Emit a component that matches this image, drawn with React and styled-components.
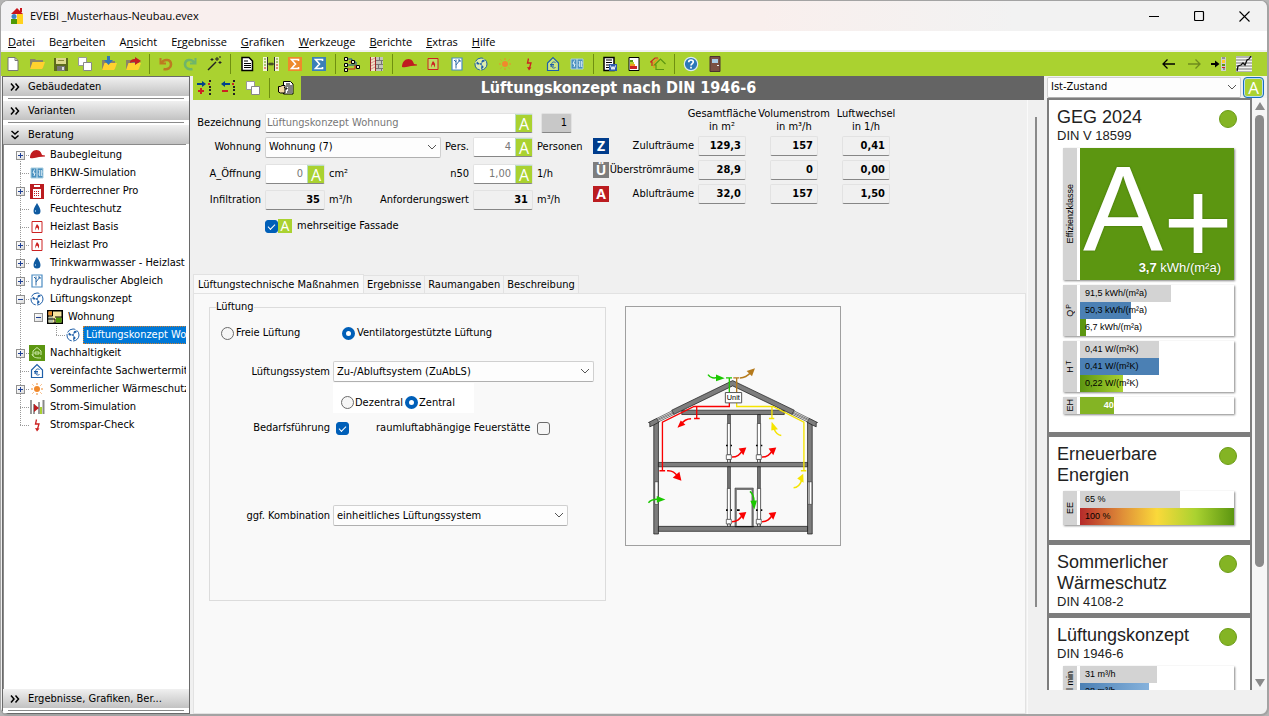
import React, { useState } from "react";
import styled, { createGlobalStyle, css } from "styled-components";

const GlobalStyle = createGlobalStyle`
  * {
    box-sizing: border-box;
  }
  body {
    margin: 0;
    background: #b4b4b4;
    font-family: "DejaVu Sans Condensed", Roboto, sans-serif;
    font-size: 11px;
    line-height: 14px;
    color: #000;
  }
  button, input, select {
    font: inherit;
    color: inherit;
    margin: 0;
    padding: 0;
  }
  button {
    border: none;
    background: none;
  }
  svg {
    display: block;
    flex: none;
  }
`;

/* ---------- icons ---------- */

const Svg = ({ size = 16, children, ...rest }) => (
  <svg width={size} height={size} viewBox="0 0 16 16" fill="none" aria-hidden="true" {...rest}>
    {children}
  </svg>
);

const AppIcon = () => (
  <Svg>
    <path d="M2 6L8 0l6 6z" fill="#c9151b" />
    <path d="M11 0h2v4h-2z" fill="#c9151b" />
    <path d="M8 6h6v10H8z" fill="#ffd21f" />
    <path d="M2 11h6v5H2z" fill="#4e9a06" />
    <circle cx="5" cy="8.500" r="2.500" fill="#3a86c8" />
  </Svg>
);
const NewIcon = () => (
  <Svg>
    <path d="M3 1.500h7l3 3v10H3z" fill="#fff" stroke="#777" />
    <path d="M10 1.500v3h3" stroke="#777" />
  </Svg>
);
const FolderBase = () => (
  <>
    <path d="M1 4h5l1 1h7v9H1z" fill="#8b8468" />
    <path d="M3.500 7H16l-2.500 7H1z" fill="#ffd22e" />
  </>
);
const OpenIcon = () => (
  <Svg>
    <path d="M1 3h5l1 1h7v9H1z" fill="#8b8468" />
    <path d="M3.500 6H16l-2.500 7H1z" fill="#ffd22e" />
  </Svg>
);
const SaveIcon = () => (
  <Svg>
    <path d="M1 2h14v13H1z" fill="#5c6b1c" />
    <path d="M3 2h10v6H3z" fill="#dcd98c" />
    <path d="M5 4h6v1H5z" fill="#8b8a3a" />
    <path d="M4 10h8v5H4z" fill="#777" />
    <path d="M9 11h2v3H9z" fill="#ddd" />
  </Svg>
);
const CopyIcon = () => (
  <Svg>
    <path d="M1.500 1.500h8v8h-8z" fill="#fff" stroke="#999" />
    <path d="M6.500 6.500h8v8h-8z" fill="#fff" stroke="#888" />
  </Svg>
);
const ImportIcon = () => (
  <Svg>
    <FolderBase />
    <path d="M6 0h3v4h3L7.500 9 3 4h3z" fill="#2f78b8" />
  </Svg>
);
const ExportIcon = () => (
  <Svg>
    <FolderBase />
    <path d="M5 7c0-3 2-4 5-4V1l6 4-6 4V6C8 6 6 6 5 7z" fill="#c41e24" />
  </Svg>
);
const UndoIcon = () => (
  <Svg>
    <path d="M2.500 2v5.500H8" stroke="#bd7a21" strokeWidth="2" />
    <path d="M3.500 7C6 2.500 13 3 13 8.500c0 3.500-3.500 5.500-7.500 4.500" stroke="#bd7a21" strokeWidth="2.600" />
  </Svg>
);
const RedoIcon = () => (
  <Svg>
    <path d="M13.500 2v5.500H8" stroke="#6fb56a" strokeWidth="2" />
    <path d="M12.500 7C10 2.500 3 3 3 8.500c0 3.500 3.500 5.500 7.500 4.500" stroke="#6fb56a" strokeWidth="2.600" />
  </Svg>
);
const WandIcon = () => (
  <Svg>
    <path d="M2 14L10 6" stroke="#222" strokeWidth="1.500" />
    <path d="M11 1v4M9 3h4M6 2v3M4.500 3.500h3M14 5v3M12.500 6.500h3M14 0v2" stroke="#222" />
  </Svg>
);
const DocIcon = () => (
  <Svg>
    <path d="M3 1.500h7l3.500 3.500v9.500H3z" fill="#fff" stroke="#000" strokeWidth="1.500" />
    <path d="M5 5h4M5 7.500h7M5 9.500h7M5 11.500h7" stroke="#000" />
  </Svg>
);
const CompareIcon = () => (
  <Svg>
    <path d="M0 1h5v14H0zM11 1h5v14h-5z" fill="#f3f6d2" />
    <path d="M4.500 1v14M11.500 1v14" stroke="#333" />
    <path d="M1 3h2M1 6h2M1 9h2M13 3h2M13 6h2" stroke="#5b9418" />
    <path d="M1 12h2M13 9h2M13 12h2" stroke="#c22" />
    <path d="M5 8h6M7 6.500v3M9 6.500v3" stroke="#222" />
  </Svg>
);
const SigmaIcon = ({ color }) => (
  <Svg>
    <path d="M1 1h14v14H1z" fill={color} />
    <path d="M11.500 5V3.500h-7L8.500 8l-4 4.500h7V11" stroke="#fff" strokeWidth="1.600" />
  </Svg>
);
const TreeIcon = () => (
  <Svg>
    <path d="M3 3h5M3 9h8M8 3v3h4v4" stroke="#1b4fa0" />
    <path d="M8 6h-3M11 9v4H3M11 11h4" stroke="#c22" />
    <path d="M.500 1.500h3v3h-3zM.500 7.500h3v3h-3zM.500 12.500h3v3h-3zM7.500 4.500h3v3h-3zM12.500 9.500h3v3h-3z" fill="#f4f4d0" stroke="#000" />
  </Svg>
);
const WallIcon = () => (
  <Svg>
    <path d="M2 1h13v14H2z" fill="#c4c4bc" />
    <path d="M3 1h4v14H3z" fill="#efe4c8" />
    <path d="M3 4l4-2M3 7l4-2M3 10l4-2M3 13l4-2" stroke="#d89090" />
    <path d="M2 1h1v14H2zM7 1h1v14H7z" fill="#a02c2c" />
    <path d="M8 4.500h7M8 8.500h7M8 12.500h7M11.500 1v3M13.500 5v3M10.500 9v3M13.500 13v2" stroke="#777" />
  </Svg>
);
const CapIcon = () => (
  <Svg>
    <path d="M1 11C1 6 4 3 7.500 3 11 3 12.500 6 13 8l3 .500v1L10 10c-3 1-6 1.500-9 1z" fill="#c01c20" />
  </Svg>
);
const FlameIcon = () => (
  <Svg>
    <path d="M3 2.500h10v11H3z" fill="#fff" fillOpacity="0.250" stroke="#c22" />
    <path d="M8 5c1.500 1.500 2.500 3 2 5l-1 1.500V9.500L8 8.500l-1 1v2c-1.500-2-.500-4 1-6.500z" fill="#c22" />
  </Svg>
);
const PipeIcon = () => (
  <Svg>
    <path d="M3 2h10v12H3z" fill="#fff" stroke="#4a8bc2" strokeWidth="1.200" />
    <path d="M5 4l2 2M7 3.500v9M7 9l4-5M9 4h2v2" stroke="#2a6aa8" />
  </Svg>
);
const FanIcon = () => (
  <Svg>
    <circle cx="8" cy="8" r="6" fill="#fff" fillOpacity="0.600" stroke="#1f5fa8" strokeDasharray="9 1.500" />
    <circle cx="8" cy="8" r="1" fill="#1f5fa8" />
    <path d="M7 8C4 9.500 2.500 8 4 5.500zM8.500 7C8 4 10.500 2.500 12 5zM8.500 9c3 1 2.500 3.500-.500 4z" fill="#1f5fa8" />
  </Svg>
);
const SunIcon = () => (
  <Svg>
    <circle cx="8" cy="8" r="3" fill="#f0892c" />
    <path d="M8 2v2M8 12v2M2 8h2M12 8h2M3.500 3.500l1 1M11.500 11.500l1 1M12.500 3.500l-1 1M4.500 11.500l-1 1" stroke="#f0892c" />
  </Svg>
);
const BoltIcon = () => (
  <Svg>
    <path d="M7.500 2.500L6.500 7h3.500L8.500 12" stroke="#c22" strokeWidth="1.300" />
    <path d="M6 11l2 3.500 2.500-3z" fill="#c22" />
  </Svg>
);
const EuroHouseIcon = () => (
  <Svg>
    <path d="M2.500 14.500V7L8 1.500 13.500 7v7.500z" fill="#fff" fillOpacity="0.400" stroke="#1f5fa8" strokeWidth="1.200" />
    <path d="M10.500 6.500c-3-1.500-4 .500-4 2.500s1 4 4 2.500M5 8.500h4M5 10h4" stroke="#1f5fa8" />
  </Svg>
);
const ChpIcon = () => (
  <Svg>
    <path d="M2 3h12v10H2z" fill="#4a90bf" stroke="#a9cfe0" />
    <path d="M8 3v10" stroke="#cde5f0" />
    <path d="M5.500 4.500L4 8h2l-1 3M10 5l1 2-1 2 1 2M12 5l1 2-1 2 1 2" stroke="#e8f5fa" />
  </Svg>
);
const ReportIcon = () => (
  <Svg>
    <path d="M2 1.500h10v13H2z" fill="#fff" stroke="#000" strokeWidth="1.500" />
    <path d="M4 4h6M4 6.500h6M4 9h4M4 11.500h3" stroke="#000" />
    <path d="M7 8h8v7H7z" fill="#2d5aa8" />
    <path d="M8.500 9.500l1.500 4 1-3 1 3 1.500-4" stroke="#fff" />
  </Svg>
);
const EnergyIcon = () => (
  <Svg>
    <path d="M3 1.500h10v13H3z" fill="#fff" stroke="#000" />
    <path d="M4 4h3v2H4z" fill="#5c9611" />
    <path d="M4 6h4v2H4z" fill="#b5cf2a" />
    <path d="M4 8h5v2H4z" fill="#f0a020" />
    <path d="M4 10h7v3H4z" fill="#c22" />
  </Svg>
);
const HousesIcon = () => (
  <Svg>
    <path d="M2 10V6H.500L5 2h3" stroke="#c22" strokeWidth="1.200" />
    <path d="M4 12V7M3.500 7L8 3h1" stroke="#f08a20" strokeWidth="1.200" />
    <path d="M14 13.500H6V9H4.500L10.500 3l5 5" stroke="#5c9611" strokeWidth="1.200" />
  </Svg>
);
const HelpIcon = () => (
  <Svg>
    <circle cx="8" cy="8" r="6.700" fill="#2d78b8" stroke="#dceaf2" strokeWidth="1.200" />
    <path d="M5.700 6.300c0-3 4.600-3 4.600-.300 0 1.500-2.300 1.700-2.300 3.500M8 10.800v1.800" stroke="#fff" strokeWidth="1.700" />
  </Svg>
);
const DoorIcon = () => (
  <Svg>
    <path d="M3 .500h10v15H3z" fill="#7a5045" stroke="#4a3030" />
    <path d="M5 3h6v4H5z" fill="#a8cbe8" />
    <path d="M10 9h2v1h-2z" fill="#eee" />
  </Svg>
);
const ArrowIcon = ({ right, color = "#000" }) => (
  <Svg>
    {right ? (
      <path d="M2 8h12M9.500 3.500L14 8l-4.500 4.500" stroke={color} strokeWidth="1.300" />
    ) : (
      <path d="M14 8H2M6.500 3.500L2 8l4.500 4.500" stroke={color} strokeWidth="1.300" />
    )}
  </Svg>
);
const DockIcon = () => (
  <Svg>
    <path d="M0 8h6" stroke="#000" strokeWidth="2" />
    <path d="M4 4.500L8.500 8 4 11.500z" fill="#000" />
    <path d="M10 1h5v14h-5z" fill="#cfcfcf" />
    <path d="M11 4h3v3h-3z" fill="#ffc928" />
    <path d="M11 8h3v2h-3z" fill="#5c9611" />
    <path d="M11 11h3v1h-3z" fill="#c22" />
    <path d="M11 2h3M12 13h2" stroke="#555" />
  </Svg>
);
const ChartIcon = () => (
  <Svg>
    <path d="M0 0h16v16H0z" fill="#b4b4b4" />
    <path d="M0 2.500h16M0 5.500h16M0 8.500h16M0 11.500h16M0 14.500h16" stroke="#f4f4f4" />
    <path d="M1 15l1-5 3-1 2-2 2 2 2-5 2-1 2-3" stroke="#111" strokeWidth="1.300" />
  </Svg>
);
const RowIcon = ({ remove }) => (
  <Svg>
    {remove ? (
      <>
        <path d="M3 4h6" stroke="#00408c" strokeWidth="2" />
        <path d="M4 1L0 4l4 3z" fill="#00408c" />
        <path d="M1 11h6" stroke="#c22" strokeWidth="2" />
      </>
    ) : (
      <>
        <path d="M0 4h6" stroke="#00408c" strokeWidth="2" />
        <path d="M5 1l4 3-4 3z" fill="#00408c" />
        <path d="M1 11h6M4 8v6" stroke="#c22" strokeWidth="2" />
      </>
    )}
    <path d="M13 0v2M13 6v2M13 9v2M13 13v2" stroke="#222" strokeWidth="2" />
    <path d="M11 3h2v2h-2z" fill="#c22" />
  </Svg>
);
const PointerDocIcon = () => (
  <Svg>
    <path d="M5.500 1.500h7L15 4v10H5.500z" fill="#fff" stroke="#000" />
    <path d="M8 4h4M8 6h6M10 8h4M10 10h4M9 12h5" stroke="#000" />
    <path d="M.500 6.500h2L4 5.500h3v1.500L6 8h3v1H7v4H2.500L.500 12z" fill="#f3d9a2" stroke="#000" />
  </Svg>
);
const CalcIcon = () => (
  <Svg>
    <path d="M1 1h14v15H1z" fill="#bb1c20" />
    <path d="M5 2h6v2H5zM4 6h8v9H4z" fill="#fff" />
    <path d="M5 8.500h6M5 10.500h6M5 12.500h6" stroke="#bb1c20" strokeDasharray="1 1" />
  </Svg>
);
const DropIcon = () => (
  <Svg>
    <path d="M8 2c1.500 3 3.500 5 3.500 8a3.500 3.500 0 0 1-7 0c0-3 2-5 3.500-8z" fill="#0f5aa0" />
    <path d="M6.500 9v2" stroke="#7fb2dd" />
  </Svg>
);
const FlatIcon = () => (
  <Svg>
    <path d="M.750 1.750h14.500v12.500H.750z" fill="#f7e6a0" stroke="#000" strokeWidth="1.500" />
    <path d="M1.500 2.500H5v4H1.500z" fill="#e88a28" />
    <path d="M9 8.500h5.500v5H9z" fill="#4e9a06" />
    <path d="M1.500 8H6v5.500H1.500z" fill="#b9c4b0" />
    <path d="M5.500 2v5H1M1 10h7v4M8 8h7" stroke="#000" />
  </Svg>
);
const SustainIcon = () => (
  <Svg>
    <path d="M0 0h16v16H0z" fill="#5c9611" />
    <path d="M4 11V6l4-3.500L12 6v4M3 9c1 4 5 4 9 4M6 7h4v2H6z" stroke="#d2ecb0" />
  </Svg>
);
const StromIcon = () => (
  <Svg>
    <path d="M2 1v14M5 5v10M10 3v12" stroke="#999" strokeWidth="2" />
    <path d="M12 8v7" stroke="#a9d130" strokeWidth="2" />
    <path d="M14.500 1v14" stroke="#888" strokeWidth="2" />
    <path d="M5 5l5 4-5 4z" fill="#bb1c20" />
  </Svg>
);
const Chevrons = ({ down }) => (
  <svg width="10" height="10" viewBox="0 0 10 10" fill="none" aria-hidden="true">
    <path d={down ? "M1.500 1l3.500 3 3.500-3M1.500 5.500l3.500 3 3.500-3" : "M1 1.500l3 3.500-3 3.500M5.500 1.500l3 3.500-3 3.500"} stroke="#000" strokeWidth="1.500" />
  </svg>
);

/* ---------- window frame ---------- */

const Window = styled.div`
  height: 100vh;
  display: flex;
  flex-direction: column;
  border: solid #a3a3a3;
  border-width: 1px 2px 2px 1px;
  border-radius: 8px;
  background: #f0f0f0;
  overflow: hidden;
`;
const TitleBar = styled.header`
  display: flex;
  align-items: center;
  height: 30px;
  flex: none;
  padding-left: 8px;
  gap: 5px;
  font: 11px/16px "Open Sans", sans-serif;
  background: linear-gradient(90deg, #f2f2f4 0%, #f9efee 12%, #f9efed 60%, #f2f2f2 80%);
`;
const WindowTitle = styled.span`
  flex: 1;
`;
const CaptionButtons = styled.div`
  display: flex;
`;
const CaptionButton = styled.button`
  width: 45px;
  height: 30px;
  display: flex;
  align-items: center;
  justify-content: center;
`;
const MenuBar = styled.nav`
  display: flex;
  gap: 14px;
  height: 21px;
  flex: none;
  padding: 2px 7px;
  background: #fff;
  border-bottom: 2px solid #f0f0f0;
  font: 11px/16px "Open Sans", sans-serif;
`;
const MenuButton = styled.button`
  height: 17px;
`;
const ToolBar = styled.div`
  display: flex;
  align-items: center;
  height: 24px;
  flex: none;
  background: #aad230;
  padding-right: 11px;
`;
const ToolButton = styled.button`
  width: ${(p) => p.$width || 24}px;
  height: 24px;
  display: flex;
  align-items: center;
  justify-content: center;
`;
const Separator = styled.span`
  width: 9px;
  height: 20px;
  display: flex;
  justify-content: center;
  &::after {
    content: "";
    width: 1px;
    background: #6f8f10;
  }
`;
const Spacer = styled.span`
  flex: 1;
`;
const Body = styled.div`
  display: flex;
  flex: 1;
  min-height: 0;
`;

/* ---------- sidebar ---------- */

const Sidebar = styled.aside`
  width: 188px;
  flex: none;
  margin: 0 3px 0 1px;
  display: flex;
  flex-direction: column;
  background: #fff;
  border: 1px solid #6a6a6a;
`;
const GroupHeader = styled.button`
  display: flex;
  align-items: center;
  gap: 8px;
  height: 19px;
  flex: none;
  padding-left: 7px;
  background: linear-gradient(#f0f0f0, #c2c2c2);
  text-align: left;
`;
const GroupRule = styled.div`
  height: 5px;
  flex: none;
  padding: 2px 5px;
  background: #fff;
  &::after {
    content: "";
    display: block;
    height: 1px;
    background: #8a8a8a;
  }
`;
const Tree = styled.ul`
  flex: 1;
  min-height: 0;
  overflow: hidden;
  margin: 0 3px 0 0;
  padding: 1px 0 0 7px;
  list-style: none;
  border-left: 1px solid #8a8a8a;
  border-top: 1px solid #8a8a8a;
`;
const TreeRow = styled.li`
  display: flex;
  align-items: center;
  height: 18px;
  white-space: nowrap;
`;
const dotsV = "repeating-linear-gradient(#999 0 1px, transparent 1px 2px)";
const dotsH = "repeating-linear-gradient(90deg, #999 0 1px, transparent 1px 2px)";
const Guide = styled.span`
  width: 18px;
  height: 18px;
  flex: none;
  display: flex;
  align-items: center;
  justify-content: flex-end;
  padding-right: 4px;
  background-repeat: no-repeat;
  ${(p) => p.$kind === "tee" && css`
    background-image: ${dotsV}, ${dotsH};
    background-size: 1px 18px, 9px 1px;
    background-position: 9px 0, 9px 9px;
  `}
  ${(p) => p.$kind === "first" && css`
    background-image: ${dotsV}, ${dotsH};
    background-size: 1px 9px, 9px 1px;
    background-position: 9px 9px, 9px 9px;
  `}
  ${(p) => p.$kind === "end" && css`
    background-image: ${dotsV}, ${dotsH};
    background-size: 1px 9px, 9px 1px;
    background-position: 9px 0, 9px 9px;
  `}
  ${(p) => p.$kind === "line" && css`
    background-image: ${dotsV};
    background-size: 1px 18px;
    background-position: 9px 0;
  `}
`;
const Expander = styled.button`
  width: 9px;
  height: 9px;
  display: flex;
  background: linear-gradient(135deg, #fff, #ddd);
  border: 1px solid #919191;
`;
const TreeLabel = styled.a`
  color: ${(p) => (p.$selected ? "#fff" : "#000")};
  background: ${(p) => (p.$selected ? "#0078d7" : "transparent")};
  outline: ${(p) => (p.$selected ? "1px dotted #d08030" : "none")};
  outline-offset: -1px;
  text-decoration: none;
  line-height: 18px;
  padding: 0 3px;
  margin-left: 2px;
`;

const treeItems = [
  { guides: ["first"], sign: "+", icon: <CapIcon />, label: "Baubegleitung" },
  { guides: ["tee"], icon: <ChpIcon />, label: "BHKW-Simulation" },
  { guides: ["tee"], sign: "+", icon: <CalcIcon />, label: "Förderrechner Pro" },
  { guides: ["tee"], icon: <DropIcon />, label: "Feuchteschutz" },
  { guides: ["tee"], icon: <FlameIcon />, label: "Heizlast Basis" },
  { guides: ["tee"], sign: "+", icon: <FlameIcon />, label: "Heizlast Pro" },
  { guides: ["tee"], sign: "+", icon: <DropIcon />, label: "Trinkwarmwasser - Heizlast und Speicher" },
  { guides: ["tee"], sign: "+", icon: <PipeIcon />, label: "hydraulischer Abgleich" },
  { guides: ["tee"], sign: "-", icon: <FanIcon />, label: "Lüftungskonzept" },
  { guides: ["line", "blank"], sign: "-", icon: <FlatIcon />, label: "Wohnung" },
  { guides: ["line", "blank", "end"], icon: <FanIcon />, label: "Lüftungskonzept Wohnung", selected: true },
  { guides: ["tee"], sign: "+", icon: <SustainIcon />, label: "Nachhaltigkeit" },
  { guides: ["tee"], icon: <EuroHouseIcon />, label: "vereinfachte Sachwertermittlung" },
  { guides: ["tee"], sign: "+", icon: <SunIcon />, label: "Sommerlicher Wärmeschutz" },
  { guides: ["tee"], icon: <StromIcon />, label: "Strom-Simulation" },
  { guides: ["end"], icon: <BoltIcon />, label: "Stromspar-Check" },
];

const TreeView = () => (
  <Tree>
    {treeItems.map((item) => (
      <TreeRow key={item.label}>
        {item.guides.map((kind, i) => (
          <Guide key={i} $kind={kind}>
            {item.sign && i === item.guides.length - 1 && (
              <Expander aria-label={item.sign === "+" ? "Aufklappen" : "Zuklappen"}>
                <svg width="7" height="7" viewBox="0 0 7 7">
                  <path d={item.sign === "+" ? "M1 3.500h5M3.500 1v5" : "M1 3.500h5"} stroke="#1d3f94" />
                </svg>
              </Expander>
            )}
          </Guide>
        ))}
        {item.icon}
        <TreeLabel href="#" $selected={item.selected}>{item.label}</TreeLabel>
      </TreeRow>
    ))}
  </Tree>
);

/* ---------- form controls ---------- */

const Field = styled.span`
  display: flex;
  height: 20px;
  min-width: 0;
  grid-column: ${(p) => p.$col || "auto"};
  width: ${(p) => (p.$width ? p.$width + "px" : "auto")};
  background: ${(p) => (p.$tone === "dark" ? "#c8c8c8" : p.$tone === "flat" ? "#f0f0f0" : "#fff")};
  border: 1px solid #e2e2e2;
  border-bottom-color: #868686;
  border-radius: 2px;
  input {
    flex: 1;
    width: 0;
    min-width: 0;
    border: none;
    background: none;
    outline: none;
    padding: 0 4px 0 1px;
    color: ${(p) => (p.$tone ? "#000" : "#777")};
    text-align: ${(p) => (p.$text ? "left" : "right")};
    font-weight: ${(p) => (p.$tone === "flat" ? "bold" : "normal")};
  }
`;
const AutoButton = styled.button`
  width: ${(p) => (p.$small ? 14 : 17)}px;
  height: ${(p) => (p.$small ? 14 : 18)}px;
  flex: none;
  background: #aad230;
  border: solid #b9dfc0;
  border-width: ${(p) => (p.$small ? "0" : "1px 0 0 1px")};
  color: #fff;
  font-family: "Open Sans", sans-serif;
  font-size: ${(p) => (p.$small ? 14 : 16)}px;
  line-height: ${(p) => (p.$small ? 14 : 16)}px;
`;
const SelectWrap = styled.span`
  position: relative;
  display: block;
  flex: ${(p) => (p.$width ? "none" : 1)};
  width: ${(p) => (p.$width ? p.$width + "px" : "auto")};
  select {
    appearance: none;
    display: block;
    width: 100%;
    height: 21px;
    padding: 0 20px 0 3px;
    background: #fdfdfd;
    border: 1px solid #d0d0d0;
    border-bottom-color: #b0b0b0;
    border-radius: 2px;
  }
  svg {
    position: absolute;
    right: 4px;
    top: 7px;
    pointer-events: none;
  }
`;
const Select = ({ id, value, width, label }) => (
  <SelectWrap $width={width}>
    <select id={id} aria-label={label} defaultValue={value}>
      <option>{value}</option>
    </select>
    <svg width="10" height="7" viewBox="0 0 10 7" fill="none">
      <path d="M1 1l4 4 4-4" stroke="#555" />
    </svg>
  </SelectWrap>
);
const Check = styled.input.attrs({ type: "checkbox" })`
  appearance: none;
  width: 13px;
  height: 13px;
  flex: none;
  border: 1px solid #6b6b6b;
  border-radius: 3px;
  background: #f6f6f6;
  &:checked {
    background: #005fb8;
    border-color: #005fb8;
  }
  &:checked::after {
    content: "";
    display: block;
    width: 6px;
    height: 3px;
    margin: 3px 2px;
    border: solid #fff;
    border-width: 0 0 1px 1px;
    transform: rotate(-45deg);
  }
`;
const Radio = styled.input.attrs({ type: "radio" })`
  appearance: none;
  width: 13px;
  height: 13px;
  flex: none;
  border: 1px solid #6b6b6b;
  border-radius: 50%;
  background: #f6f6f6;
  &:checked {
    border: 4px solid #005fb8;
    background: #fff;
  }
`;
const RadioLabel = styled.label`
  display: flex;
  align-items: center;
  gap: 2px;
`;

/* ---------- center ---------- */

const Center = styled.main`
  flex: 1;
  min-width: 0;
  display: flex;
  flex-direction: column;
`;
const CenterHeader = styled.div`
  display: flex;
  height: 24px;
  flex: none;
  background: #646464;
`;
const SubTools = styled.div`
  display: flex;
  align-items: center;
  width: 108px;
  background: #aad230;
`;
const PageTitle = styled.h1`
  flex: 1;
  margin: 0;
  padding-right: 108px;
  text-align: center;
  color: #fff;
  font-size: 16px;
  line-height: 24px;
  font-weight: bold;
`;
const CenterBody = styled.div`
  flex: 1;
  min-height: 0;
  display: flex;
`;
const Content = styled.div`
  flex: 1;
  min-width: 0;
  display: flex;
  flex-direction: column;
`;
const Gutter = styled.div`
  width: 17px;
  flex: none;
  border-left: 1px solid #fafafa;
  padding: 17px 7px 107px;
  display: flex;
  &::after {
    content: "";
    width: 2px;
    background: #8a8a8a;
  }
`;
const FormArea = styled.section`
  display: flex;
  align-items: flex-start;
  height: 173px;
  flex: none;
`;
const FormGrid = styled.div`
  display: grid;
  grid-template-columns: 68px 60px 140px 60px 56px;
  grid-template-rows: 20px 28px repeat(3, 26px);
  column-gap: 4px;
  align-items: center;
  margin-top: 13px;
  width: 400px;
  flex: none;
`;
const Cell = styled.div`
  grid-column: ${(p) => p.$col || "auto"};
  display: flex;
  align-items: center;
  justify-content: ${(p) => p.$justify || "flex-start"};
  gap: ${(p) => p.$gap || 0}px;
  padding-left: ${(p) => p.$indent || 0}px;
`;
const Label = styled.label`
  text-align: right;
  white-space: nowrap;
  padding-left: ${(p) => p.$indent || 0}px;
`;
const RoomTable = styled.table`
  table-layout: fixed;
  width: 297px;
  margin-top: 6px;
  border-collapse: collapse;
  th, td {
    padding: 0;
    font-weight: normal;
  }
  thead th {
    height: 28px;
    line-height: 13px;
    vertical-align: middle;
  }
  tbody tr {
    height: 24px;
  }
  tbody th {
    text-align: right;
    white-space: nowrap;
    padding-right: 4px;
  }
`;
const HeadText = styled.div`
  width: 72px;
  margin-left: -12px;
  text-align: center;
`;
const Letter = styled.span`
  display: block;
  width: 16px;
  height: 16px;
  background: ${(p) => p.$color};
  color: #fff;
  font: bold 14px/16px "Open Sans", sans-serif;
  text-align: center;
`;

const rooms = [
  { letter: "Z", color: "#003c8c", name: "Zulufträume", values: ["129,3", "157", "0,41"] },
  { letter: "Ü", color: "#7d7d7d", name: "Überströmräume", values: ["28,9", "0", "0,00"] },
  { letter: "A", color: "#bb1c20", name: "Ablufträume", values: ["32,0", "157", "1,50"] },
];

const Tabs = styled.div`
  display: flex;
  align-items: flex-end;
  height: 20px;
  flex: none;
`;
const Tab = styled.button`
  height: ${(p) => (p.$active ? 20 : 18)}px;
  padding: 0 ${(p) => (p.$active ? 4 : 3)}px;
  background: ${(p) => (p.$active ? "#f9f9f9" : "#f2f2f2")};
  border: 1px solid #e2e2e2;
  border-width: 1px 1px 0 ${(p) => (p.$active ? 1 : 0)}px;
  margin-bottom: ${(p) => (p.$active ? -1 : 0)}px;
  white-space: nowrap;
`;
const TabPanel = styled.section`
  flex: 1;
  min-height: 0;
  display: flex;
  align-items: flex-start;
  gap: 19px;
  padding: 6px 15px;
  margin-right: 1px;
  background: #f9f9f9;
  border: 1px solid #e2e2e2;
`;
const Group = styled.fieldset`
  width: 397px;
  flex: none;
  margin: 0;
  padding: 12px 11px 74px 0;
  border: 1px solid #dcdcdc;
  min-width: 0;
`;
const Legend = styled.legend`
  margin-left: 6px;
  padding: 0;
`;
const ModeRow = styled.div`
  display: flex;
  padding-left: 11px;
  height: 14px;
  margin-bottom: 21px;
  & > :first-child {
    width: 121px;
  }
`;
const FormRow = styled.div`
  display: grid;
  grid-template-columns: 120px 1fr;
  column-gap: 3px;
  align-items: center;
  margin-bottom: ${(p) => p.$after || 0}px;
`;
const TypeBox = styled.div`
  width: 141px;
  height: 30px;
  margin: 1px 0 8px 123px;
  padding: 13px 0 0 8px;
  display: flex;
  align-items: flex-start;
  gap: 2px;
  background: #fff;
  label {
    height: 13px;
    gap: 1px;
  }
`;
const Figure = styled.figure`
  flex: none;
  margin: 6px 0 0;
  border: 1px solid #a0a0a0;
`;

const Flow = ({ d, head, color }) => (
  <>
    <path d={d} stroke={color} strokeWidth="4.500" fill="none" />
    <path d={head} fill={color} />
  </>
);

const HouseDrawing = () => (
  <svg width="214" height="238" viewBox="18 20 642 715" role="img" aria-label="Lüftungsschema">
    <g fill="#7d7d7d" stroke="#111" strokeWidth="2">
      <path d="M101 360h14v342h-14zM563 360h14v342h-14z" />
      <path d="M115 679h448v15H115zM115 487h448v13H115zM185 330h308v13H185z" />
      <path d="M323 343h8v144h-8zM413 343h8v144h-8zM323 500h8v179h-8zM413 500h8v179h-8z" />
      <path d="M338 241L155 330l6 13 177-86 179 86 6-13z" />
      <path d="M85 367l26-13 7 11-18 10-11 5v-12zM593 367l-26-13-7 11 18 10 11 5v-12z" />
    </g>
    <g fill="#fff" stroke="#333" strokeWidth="2">
      <path d="M110 355l46-23 5 11-46 22zM568 355l-46-23-5 11 46 22z" />
      <path d="M112 358l46-22M113 361l47-22M566 358l-46-22M565 361l-47-22" />
      <path d="M104 545h10v68h-10zM564 545h12v68h-12zM568 545v68" />
      <path d="M322 370h9v94h-9zM412 370h10v94h-10zM322 565h9v94h-9zM412 565h10v94h-10z" />
      <path d="M319 464h15v14h-15zM409 464h15v14h-15zM319 658h15v14h-15zM409 658h15v14h-15z" />
      <path d="M323 478h7v9h-7zM413 478h7v9h-7zM323 672h7v7h-7zM413 672h7v7h-7z" />
    </g>
    <path d="M318 436h5M332 436h4M408 436h5M423 436h4M318 630h5M332 630h4M408 630h5M423 630h4M351 630h8" stroke="#000" strokeWidth="5" />
    <path d="M348 680V567h49v113" stroke="#777" strokeWidth="5" fill="none" />
    <path d="M345 680V564h55v116" stroke="#111" strokeWidth="1.500" fill="none" />
    <path d="M345 680h56" stroke="#111" strokeWidth="3" />
    <g fill="none" strokeWidth="4">
      <path d="M328 277v-44M318 233h18" stroke="#1bc800" />
      <path d="M350 277v-44M340 233h18" stroke="#b57a1c" />
      <path d="M328 308v11H222l-95 47v145M118 512h17M230 319v35M222 355h17" stroke="#fa0000" />
      <path d="M350 308v11h109l93 47v145M543 512h16M456 319v35M447 355h16" stroke="#f5e400" />
    </g>
    <path d="M316 277h49v31h-49z" fill="#fff" stroke="#555" strokeWidth="3" />
    <text x="340" y="300" textAnchor="middle" fontFamily="Liberation Sans, sans-serif" fontSize="22" fill="#000">Unit</text>
    <Flow d="M264 223c8 12 18 11 30 9" head="M288 223l26 11-26 9z" color="#1bc800" />
    <Flow d="M360 233c14 0 22-4 32-16" head="M380 212l25-8-9 24z" color="#b57a1c" />
    <Flow d="M213 356c-15 0-23 6-31 18" head="M182 361l14 13-24 9z" color="#fa0000" />
    <Flow d="M141 512c16-2 24 5 32 17" head="M178 515l6 27-26-9z" color="#fa0000" />
    <Flow d="M484 406c-12-1-17-8-22-20" head="M455 365l19 22-20 4z" color="#f5e400" />
    <Flow d="M521 563c15-1 20-10 24-22" head="M532 535l18-14 1 27z" color="#f5e400" />
    <Flow d="M85 608c8-9 16-11 29-10" head="M110 588l26 10-26 10z" color="#1bc800" />
    <Flow d="M390 574c10 9 12 17 12 29" head="M391 602l20-1-8 27z" color="#1bc800" />
    <Flow d="M336 471c16 0 23-8 32-20" head="M356 445l23-3-9 23z" color="#fa0000" />
    <Flow d="M426 471c16 0 23-8 32-20" head="M446 445l23-3-9 23z" color="#fa0000" />
    <Flow d="M336 665c16 0 23-8 32-20" head="M356 639l23-3-9 23z" color="#fa0000" />
    <Flow d="M426 665c16 0 23-8 32-20" head="M446 639l23-3-9 23z" color="#fa0000" />
  </svg>
);

/* ---------- results column ---------- */

const Results = styled.aside`
  width: 220px;
  flex: none;
  margin-left: 3px;
  display: flex;
  flex-direction: column;
  padding-bottom: 24px;
`;
const VariantRow = styled.div`
  display: flex;
  align-items: center;
  gap: 2px;
  height: 22px;
  flex: none;
  padding-right: 3px;
`;
const VariantAuto = styled.button`
  width: 21px;
  height: 21px;
  flex: none;
  border: 1px solid #1a6fc0;
  border-radius: 4px;
  background: #aad230;
  box-shadow: inset 0 0 0 1px #b9dcf4;
  color: #fff;
  font: 17px/17px "Open Sans", sans-serif;
`;
const ResultsBody = styled.div`
  flex: 1;
  min-height: 0;
  display: flex;
`;
const Cards = styled.div`
  flex: 1;
  min-width: 0;
  overflow: hidden;
  display: flex;
  flex-direction: column;
  gap: 5px;
  padding: 2px 2px 0;
  background: #7d7d7d;
  font-family: "Liberation Sans", sans-serif;
`;
const Card = styled.section`
  flex: none;
  background: #fff;
  padding: 7px 13px ${(p) => p.$bottom}px 8px;
`;
const CardHead = styled.div`
  display: flex;
  justify-content: space-between;
  align-items: flex-start;
  color: #222;
  h2 {
    margin: 0;
    font-size: 18px;
    line-height: 21px;
    font-weight: normal;
  }
  p {
    margin: 0;
    font-size: 13px;
    line-height: 15px;
  }
`;
const CardTitle = styled.div`
  max-width: 140px;
`;
const Dot = styled.span`
  width: 18px;
  height: 18px;
  flex: none;
  margin-top: 3px;
  border-radius: 50%;
  background: #84b424;
  border: 1px solid #6c9c18;
`;
const Meter = styled.div`
  display: flex;
  gap: 3px;
  margin: 5px 3px 0 6px;
  box-shadow: 1px 1px 2px #888;
`;
const MeterLabel = styled.div`
  width: 14px;
  flex: none;
  display: flex;
  align-items: center;
  justify-content: center;
  background: #d3d3d3;
  font-size: 9px;
  line-height: 12px;
  overflow: hidden;
  span {
    writing-mode: vertical-rl;
    transform: rotate(180deg);
    white-space: nowrap;
  }
  sup {
    font-size: 7px;
    line-height: 7px;
    vertical-align: text-top;
    padding-top: 1px;
  }
`;
const Bars = styled.div`
  flex: 1;
  min-width: 0;
  background: #fff;
`;
const Bar = styled.div`
  height: 17px;
  padding-left: 5px;
  background: ${(p) => p.$fill};
  font-size: 9px;
  line-height: 17px;
  white-space: nowrap;
`;
const EhBar = styled(Bar)`
  color: #fff;
  font-weight: bold;
  text-align: right;
`;
const Grade = styled.div`
  flex: 1;
  min-width: 0;
  height: 132px;
  display: flex;
  flex-direction: column;
  align-items: flex-end;
  background: #5c9611;
  color: #fff;
  text-shadow: 0 0 2px #3a6a00;
`;
const GradeLetters = styled.div`
  display: flex;
  align-items: flex-end;
  align-self: flex-start;
  padding: 9px 0 0 3px;
  font-size: 120px;
  line-height: 102px;
`;
const Plus = styled.span`
  line-height: 74px;
`;
const GradeValue = styled.div`
  padding-right: 13px;
  font-size: 13px;
  line-height: 18px;
`;
const ScrollBar = styled.div`
  width: 15px;
  flex: none;
  display: flex;
  flex-direction: column;
  align-items: center;
  padding: 4px 0 3px;
  gap: 5px;
  background: #f6f6f6;
`;
const Thumb = styled.div`
  width: 9px;
  flex: 1;
  margin-bottom: 107px;
  border-radius: 5px;
  background: #8a8a8a;
`;

const rainbow = "linear-gradient(90deg, #b52a2a, #e09038 28%, #fad93a 50%, #aad230 75%, #5c9611)";
const cards = [
  {
    title: "GEG 2024",
    norm: "DIN V 18599",
    bottom: 18,
    grade: true,
    meters: [
      {
        key: "QP",
        name: <>Q<sup>P</sup></>,
        bars: [["91,5 kWh/(m²a)", 59, "#d3d3d3"], ["50,3 kWh/(m²a)", 33, "#4b80b4"], ["6,7 kWh/(m²a)", 4, "#5c9611"]],
      },
      {
        key: "HT",
        name: <>H<sup>T</sup></>,
        bars: [["0,41 W/(m²K)", 51, "#d3d3d3"], ["0,41 W/(m²K)", 51, "#4b80b4"], ["0,22 W/(m²K)", 28, "linear-gradient(90deg, #5c9611, #aad230)"]],
      },
      { key: "EH", name: "EH", bars: [["40", 22, "#84b424"]] },
    ],
  },
  {
    title: "Erneuerbare Energien",
    bottom: 15,
    meters: [{ key: "EE", name: "EE", bars: [["65 %", 65, "#d3d3d3"], ["100 %", 100, rainbow]] }],
  },
  { title: "Sommerlicher Wärmeschutz", norm: "DIN 4108-2", bottom: 4, meters: [] },
  {
    title: "Lüftungskonzept",
    norm: "DIN 1946-6",
    bottom: 10,
    meters: [
      {
        key: "nL",
        name: "nl min",
        bars: [["31 m³/h", 50, "#d3d3d3"], ["28 m³/h", 45, "linear-gradient(90deg, #4b80b4, #86b2dc)"]],
      },
    ],
  },
];

const ResultCard = ({ card }) => (
  <Card $bottom={card.bottom}>
    <CardHead>
      <CardTitle>
        <h2>{card.title}</h2>
        {card.norm && <p>{card.norm}</p>}
      </CardTitle>
      <Dot />
    </CardHead>
    {card.grade && (
      <Meter>
        <MeterLabel><span>Effizienzklasse</span></MeterLabel>
        <Grade>
          <GradeLetters><span>A</span><Plus>+</Plus></GradeLetters>
          <GradeValue><b>3,7</b> kWh/(m²a)</GradeValue>
        </Grade>
      </Meter>
    )}
    {card.meters.map((meter) => (
      <Meter key={meter.key}>
        <MeterLabel><span>{meter.name}</span></MeterLabel>
        <Bars>
          {meter.bars.map(([text, percent, fill], i) =>
            meter.key === "EH" ? (
              <EhBar key={i} $fill={fill} style={{ width: percent + "%" }}>{text}</EhBar>
            ) : (
              <Bar key={i} $fill={fill} style={{ width: percent + "%" }}>{text}</Bar>
            )
          )}
        </Bars>
      </Meter>
    ))}
  </Card>
);

/* ---------- data for the bars on top ---------- */

const menus = [
  ["", "D", "atei"],
  ["Be", "a", "rbeiten"],
  ["A", "n", "sicht"],
  ["E", "r", "gebnisse"],
  ["", "G", "rafiken"],
  ["", "W", "erkzeuge"],
  ["", "B", "erichte"],
  ["", "E", "xtras"],
  ["", "H", "ilfe"],
];

const tools = [
  ["Neu", <NewIcon />], ["Öffnen", <OpenIcon />], ["Speichern", <SaveIcon />], ["Kopieren", <CopyIcon />],
  ["Importieren", <ImportIcon />], ["Exportieren", <ExportIcon />], null,
  ["Rückgängig", <UndoIcon />], ["Wiederholen", <RedoIcon />], ["Assistent", <WandIcon />], null,
  ["Bericht", <DocIcon />], ["Vergleich", <CompareIcon />], ["Summe", <SigmaIcon color="#ee8a2c" />],
  ["Ergebnisse", <SigmaIcon color="#3b80b8" />], null,
  ["Struktur", <TreeIcon />], ["Bauteile", <WallIcon />], null,
  ["Baubegleitung", <CapIcon />], ["Heizlast", <FlameIcon />], ["Abgleich", <PipeIcon />], ["Lüftung", <FanIcon />],
  ["Sommer", <SunIcon />], ["Strom", <BoltIcon />], ["Sachwert", <EuroHouseIcon />], ["BHKW", <ChpIcon />], null,
  ["Word", <ReportIcon />], ["Energieausweis", <EnergyIcon />], ["Fahrplan", <HousesIcon />], null,
  ["Hilfe", <HelpIcon />], ["Beenden", <DoorIcon />],
];

function App() {
  const [mode, setMode] = useState("ventilator");
  const [type, setType] = useState("zentral");

  return (
    <>
      <GlobalStyle />
      <Window>
        <TitleBar>
          <AppIcon />
          <WindowTitle>EVEBI _Musterhaus-Neubau.evex</WindowTitle>
          <CaptionButtons>
            <CaptionButton aria-label="Minimieren">
              <svg width="11" height="11"><path d="M0 5.500h10" stroke="#000" /></svg>
            </CaptionButton>
            <CaptionButton aria-label="Maximieren">
              <svg width="11" height="11"><rect x="0.500" y="0.500" width="9" height="9" rx="1" fill="none" stroke="#000" strokeWidth="1.200" /></svg>
            </CaptionButton>
            <CaptionButton aria-label="Schließen">
              <svg width="11" height="11"><path d="M.500.500l10 10M10.500.500l-10 10" stroke="#000" strokeWidth="1.100" /></svg>
            </CaptionButton>
          </CaptionButtons>
        </TitleBar>
        <MenuBar>
          {menus.map(([before, key, after]) => (
            <MenuButton key={before + key + after}>{before}<u>{key}</u>{after}</MenuButton>
          ))}
        </MenuBar>
        <ToolBar>
          {tools.map((tool, i) =>
            tool ? <ToolButton key={i} aria-label={tool[0]}>{tool[1]}</ToolButton> : <Separator key={i} />
          )}
          <Spacer />
          <ToolButton $width={25} aria-label="Zurück"><ArrowIcon /></ToolButton>
          <ToolButton $width={25} aria-label="Vor"><ArrowIcon right color="#6f8c1c" /></ToolButton>
          <ToolButton $width={25} aria-label="Andocken"><DockIcon /></ToolButton>
          <ToolButton $width={25} aria-label="Diagramm"><ChartIcon /></ToolButton>
        </ToolBar>
        <Body>
          <Sidebar>
            <GroupHeader><Chevrons />Gebäudedaten</GroupHeader>
            <GroupRule />
            <GroupHeader><Chevrons />Varianten</GroupHeader>
            <GroupRule />
            <GroupHeader><Chevrons down />Beratung</GroupHeader>
            <TreeView />
            <GroupHeader><Chevrons />Ergebnisse, Grafiken, Ber...</GroupHeader>
            <GroupRule />
          </Sidebar>

          <Center>
            <CenterHeader>
              <SubTools>
                <ToolButton aria-label="Zeile hinzufügen"><RowIcon /></ToolButton>
                <ToolButton aria-label="Zeile entfernen"><RowIcon remove /></ToolButton>
                <ToolButton aria-label="Duplizieren"><CopyIcon /></ToolButton>
                <Separator />
                <ToolButton aria-label="Auswählen"><PointerDocIcon /></ToolButton>
              </SubTools>
              <PageTitle>Lüftungskonzept nach DIN 1946-6</PageTitle>
            </CenterHeader>
            <CenterBody>
              <Content>
                <FormArea>
                  <FormGrid>
                    <Label htmlFor="bezeichnung">Bezeichnung</Label>
                    <Field $col="2 / 5" $text>
                      <input id="bezeichnung" defaultValue="Lüftungskonzept Wohnung" />
                      <AutoButton>A</AutoButton>
                    </Field>
                    <Cell $indent={4}>
                      <Field $width={31} $tone="dark"><input aria-label="Nummer" defaultValue="1" /></Field>
                    </Cell>

                    <Label htmlFor="wohnung">Wohnung</Label>
                    <Cell $col="2 / 4" $gap={4}>
                      <Select id="wohnung" value="Wohnung (7)" />
                      <Label htmlFor="personen">Pers.</Label>
                    </Cell>
                    <Field>
                      <input id="personen" defaultValue="4" />
                      <AutoButton>A</AutoButton>
                    </Field>
                    <span>Personen</span>

                    <Label htmlFor="oeffnung">A_Öffnung</Label>
                    <Field>
                      <input id="oeffnung" defaultValue="0" />
                      <AutoButton>A</AutoButton>
                    </Field>
                    <Cell $justify="space-between">
                      <span>cm²</span>
                      <Label htmlFor="n50">n50</Label>
                    </Cell>
                    <Field>
                      <input id="n50" defaultValue="1,00" />
                      <AutoButton>A</AutoButton>
                    </Field>
                    <span>1/h</span>

                    <Label htmlFor="infiltration">Infiltration</Label>
                    <Field $tone="flat"><input id="infiltration" readOnly value="35" /></Field>
                    <Cell $justify="space-between">
                      <span>m³/h</span>
                      <Label htmlFor="anforderung">Anforderungswert</Label>
                    </Cell>
                    <Field $tone="flat"><input id="anforderung" readOnly value="31" /></Field>
                    <span>m³/h</span>

                    <Cell $col="2 / 6">
                      <Check id="fassade" defaultChecked />
                      <AutoButton $small>A</AutoButton>
                      <Label htmlFor="fassade" $indent={5}>mehrseitige Fassade</Label>
                    </Cell>
                  </FormGrid>

                  <RoomTable>
                    <colgroup>
                      <col width="16" />
                      <col width="89" />
                      <col width="72" />
                      <col width="72" />
                      <col width="48" />
                    </colgroup>
                    <thead>
                      <tr>
                        <th />
                        <th />
                        <th><HeadText>Gesamtfläche<br />in m²</HeadText></th>
                        <th><HeadText>Volumenstrom<br />in m³/h</HeadText></th>
                        <th><HeadText>Luftwechsel<br />in 1/h</HeadText></th>
                      </tr>
                    </thead>
                    <tbody>
                      {rooms.map((room) => (
                        <tr key={room.name}>
                          <td><Letter $color={room.color}>{room.letter}</Letter></td>
                          <th scope="row">{room.name}</th>
                          {room.values.map((value, i) => (
                            <td key={i}>
                              <Field $width={48} $tone="flat"><input aria-label={room.name} readOnly value={value} /></Field>
                            </td>
                          ))}
                        </tr>
                      ))}
                    </tbody>
                  </RoomTable>
                </FormArea>

                <Tabs>
                  <Tab $active>Lüftungstechnische Maßnahmen</Tab>
                  <Tab>Ergebnisse</Tab>
                  <Tab>Raumangaben</Tab>
                  <Tab>Beschreibung</Tab>
                </Tabs>
                <TabPanel>
                  <Group>
                    <Legend>Lüftung</Legend>
                    <ModeRow>
                      <RadioLabel>
                        <Radio name="mode" checked={mode === "frei"} onChange={() => setMode("frei")} />
                        Freie Lüftung
                      </RadioLabel>
                      <RadioLabel>
                        <Radio name="mode" checked={mode === "ventilator"} onChange={() => setMode("ventilator")} />
                        Ventilatorgestützte Lüftung
                      </RadioLabel>
                    </ModeRow>
                    <FormRow>
                      <Label htmlFor="system">Lüftungssystem</Label>
                      <Select id="system" value="Zu-/Abluftsystem (ZuAbLS)" />
                    </FormRow>
                    <TypeBox>
                      <RadioLabel>
                        <Radio name="type" checked={type === "dezentral"} onChange={() => setType("dezentral")} />
                        Dezentral
                      </RadioLabel>
                      <RadioLabel>
                        <Radio name="type" checked={type === "zentral"} onChange={() => setType("zentral")} />
                        Zentral
                      </RadioLabel>
                    </TypeBox>
                    <FormRow $after={70}>
                      <Label htmlFor="bedarf">Bedarfsführung</Label>
                      <Cell $gap={7} $indent={3}>
                        <Check id="bedarf" defaultChecked />
                        <Label htmlFor="feuer" $indent={20}>raumluftabhängige Feuerstätte</Label>
                        <Check id="feuer" />
                      </Cell>
                    </FormRow>
                    <FormRow>
                      <Label htmlFor="kombi">ggf. Kombination</Label>
                      <Select id="kombi" width={235} value="einheitliches Lüftungssystem" />
                    </FormRow>
                  </Group>
                  <Figure><HouseDrawing /></Figure>
                </TabPanel>
              </Content>
              <Gutter />
            </CenterBody>
          </Center>

          <Results>
            <VariantRow>
              <Select label="Variante" value="Ist-Zustand" />
              <VariantAuto>A</VariantAuto>
            </VariantRow>
            <ResultsBody>
              <Cards>
                {cards.map((card) => <ResultCard key={card.title} card={card} />)}
              </Cards>
              <ScrollBar>
                <svg width="10" height="8"><path d="M5 0l5 8H0z" fill="#8a8a8a" /></svg>
                <Thumb />
                <svg width="10" height="8"><path d="M0 0h10L5 8z" fill="#8a8a8a" /></svg>
              </ScrollBar>
            </ResultsBody>
          </Results>
        </Body>
      </Window>
    </>
  );
}

export default App;
